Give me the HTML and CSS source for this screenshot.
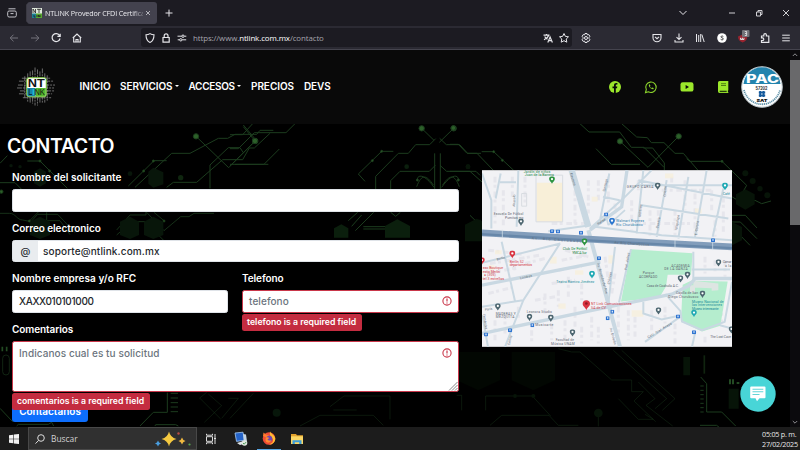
FILE: index.html
```html
<!DOCTYPE html>
<html lang="es">
<head>
<meta charset="utf-8">
<title>NTLINK Provedor CFDI Certificado</title>
<link rel="stylesheet" href="styles.css">
</head>
<body>
<svg width="0" height="0" class="defs">
  <symbol id="pin" viewBox="-10 -12 20 26"><path d="M0 12C-2 6-9 3-9-3A9 9 0 0 1 9-3C9 3 2 6 0 12Z"/><circle cy="-3" r="3.6" fill="#fff"/></symbol>
  <symbol id="stop" viewBox="0 0 12 12"><rect width="12" height="12" rx="2" fill="#2f74d0"/><path d="M4 3h4v5H4z" fill="#d8e8fb"/></symbol>
  <symbol id="warn" viewBox="0 0 12 12"><circle cx="6" cy="6" r="4.1" fill="none" stroke="#c9374a" stroke-width="1.1"/><path d="M6 3.5v3M6 7.6v1" stroke="#c9374a" stroke-width="1.2"/></symbol>
</svg>

<div class="tabbar">
  <svg class="ic recent" viewBox="0 0 16 16"><rect x="3.7" y="6" width="8.6" height="6" rx="1.4"/><path d="M4.5 3.8h7M6.500 8.600h3"/></svg>
  <div class="tab">
    <svg class="favicon" viewBox="0 0 10 10"><rect width="10" height="10" fill="#dfe8dd"/><rect y="5.5" width="4" height="4.5" fill="#1b7f94"/><rect x="4" y="5.5" width="6" height="4.5" fill="#55a52f"/><path d="M1 5V1l2.500 4V1M5 1.300h4M7 1v4M2 7v2h1.500M5 7v2M6.500 9V7l1.500 2V7" stroke="#222" stroke-width=".8" fill="none"/></svg>
    <span class="tab-title">NTLINK Provedor CFDI Certifica</span>
    <svg class="close" viewBox="0 0 8 8"><path d="M2 2l4 4M6 2l-4 4"/></svg>
  </div>
  <svg class="ic plus" viewBox="0 0 16 16"><path d="M8 4.600v7M4.500 8h7"/></svg>
  <svg class="ic chev" viewBox="0 0 16 16"><path d="M4.500 6l3.500 3.500L11.500 6"/></svg>
  <svg class="ic win" viewBox="0 0 16 16"><path d="M5 8h6"/></svg>
  <svg class="ic win" viewBox="0 0 16 16"><path d="M5.500 7h4v4h-4zM7 7V5.500h4v4H9.500"/></svg>
  <svg class="ic win" viewBox="0 0 16 16"><path d="M5 5l6 6M11 5l-6 6"/></svg>
</div>

<div class="toolbar">
  <div class="navs">
    <svg class="ic dim" viewBox="0 0 16 16"><path d="M12 8H4.200M7.500 4.700L4.200 8l3.300 3.300"/></svg>
    <svg class="ic dim" viewBox="0 0 16 16"><path d="M4 8h7.800M8.500 4.700L11.800 8l-3.300 3.300"/></svg>
    <svg class="ic" viewBox="0 0 16 16"><path d="M11.600 5.600A4 4 0 1 0 12 8.500M12.200 3.700v2.700H9.400" stroke-width="1.200"/></svg>
    <svg class="ic" viewBox="0 0 16 16"><path d="M3.800 8L8 4l4.200 4M4.700 7.500V12h6.600V7.500M7 12V9.500h2V12" stroke-width="1.100"/></svg>
  </div>
  <div class="urlbar">
    <svg class="ic" viewBox="0 0 16 16"><path d="M8 3.600c1.300.8 2.600 1.100 4 1.100 0 3.500-.8 6.300-4 7.700-3.200-1.400-4-4.200-4-7.700 1.400 0 2.700-.3 4-1.100z" stroke-width="1.100"/></svg>
    <svg class="ic" viewBox="0 0 16 16"><path d="M5 7.500h6.200v4.700H5zM6.200 7.500V5.700a1.900 1.900 0 0 1 3.800 0v1.800" stroke-width="1.200"/></svg>
    <svg class="ic" viewBox="0 0 16 16"><path d="M3.500 6.200h4.200M10.500 6.200h1.800M3.700 9.800h1.600M8.200 9.800h4"/><circle cx="9" cy="6.200" r="1.200"/><circle cx="6.800" cy="9.800" r="1.200"/></svg>
    <span class="url">https://www.<b>ntlink.com.mx</b>/contacto</span>
    <svg class="ic" viewBox="0 0 16 16"><path d="M3.500 5.200h6M6.500 4v1.200M8.800 5.200C8 7.500 6 9 4 9.800M4.700 6.500c.8 1.500 1.800 2.200 2.800 2.700M7.800 12.500l2.300-5.500 2.300 5.500M8.600 10.700h3" stroke-width="1.200"/></svg>
    <svg class="ic" viewBox="0 0 16 16"><path d="M8 3.500l1.400 2.900 3.100.4-2.300 2.200.6 3.200L8 10.700l-2.800 1.500.6-3.200-2.300-2.200 3.100-.4z"/></svg>
  </div>
  <svg class="ic gear" viewBox="0 0 16 16"><path d="M7 3.500h2l.4 1.400 1.400-.3 1.100 1.700-.9 1.200v1l.9 1.200-1.100 1.700-1.400-.3L9 12.500H7l-.4-1.400-1.400.3-1.100-1.700.9-1.200v-1l-.9-1.200 1.100-1.700 1.400.3z"/><circle cx="8" cy="8" r="1.500"/></svg>
  <div class="tools">
    <svg class="ic" viewBox="0 0 16 16"><path d="M4 4.500h8v3.200a4 4 0 0 1-8 0zM6 6.800l2 1.900 2-1.900" stroke-width="1.100"/></svg>
    <svg class="ic" viewBox="0 0 16 16"><path d="M8 3.500v6M5.500 7.200L8 9.600l2.500-2.400M4 10v2h8v-2" stroke-width="1.100"/></svg>
    <svg class="ic" viewBox="0 0 16 16"><path d="M4.500 4v8M6.700 5v7M8.700 4v8M9.800 4.500l2.400 7.500"/></svg>
    <svg class="ic" viewBox="0 0 16 16"><circle cx="8" cy="8" r="4.800" fill="#fff" stroke="none"/><path d="M9.300 6.500c-1-.9-2.500-.4-2.300.5.200 1 2.300.7 2.300 1.900 0 1-1.600 1.300-2.600.4" stroke="#333"/></svg>
    <svg class="ic" viewBox="0 0 16 16"><path d="M3 6.500l4.500-2 4.800 2c0 3-1.800 5-4.600 6C4.500 11.500 3 9.500 3 6.500z" fill="#98242f" stroke="none"/><path d="M5.500 7.800v1.700h1.800V7.800v1.700H9V7.800" stroke="#ddd"/><rect x="7" y="0" width="7.500" height="7" rx="1" fill="#737378" stroke="none"/><path d="M9.800 1.500h1.800v4M10 3.500h1.500M9.800 5.500h1.800" stroke="#eee" stroke-width=".8"/></svg>
    <svg class="ic" viewBox="0 0 16 16"><path d="M4.500 6h2.300V5a1.300 1.300 0 0 1 2.600 0v1h2.400v6.300H4.500v-1.800h1a1.300 1.300 0 0 0 0-2.600h-1z" stroke-width="1.200"/></svg>
    <svg class="ic" viewBox="0 0 16 16"><path d="M4.200 5.200h7.600M4.200 8h7.600M4.200 10.800h7.600"/></svg>
  </div>
</div>

<div class="viewport">
<div class="page">
  <header class="header">
    <svg class="logo" viewBox="0 0 40 40">
      <path d="M8 9v22M11 6v29M13.500 4v32M16 3v34M18.500 0v39M21 2v37M23.500 4v33M26 1v36M28.500 6v30M31 8v26M2 14h36M1 18h38M0 21h38M3 24h35M2 27h34M5 11h29M6 31h29" stroke="#8a8a8a" stroke-width=".8" stroke-dasharray="5 1 2 1"/>
      <rect x="10" y="10.500" width="20" height="19.500" rx="2" fill="#fff" stroke="#78c838"/>
      <path d="M10.500 21H19v8.500h-7q-1.500 0-1.500-1.500z" fill="#1787a8"/><path d="M19 21h10.500v7q0 1.500-1.500 1.500h-9z" fill="#55b82f"/>
      <text x="11" y="20.300" font-size="10.500" font-weight="600" textLength="17.500" lengthAdjust="spacingAndGlyphs" fill="#111">NT</text>
      <text x="11.500" y="28.600" font-size="8.500" textLength="17" lengthAdjust="spacingAndGlyphs"><tspan fill="#111">L</tspan><tspan fill="#2ce0ff">I</tspan><tspan fill="#111">NK</tspan></text>
    </svg>
    <nav class="menu">
      <span class="m1">INICIO</span><span class="m2 drop">SERVICIOS</span><span class="m3 drop">ACCESOS</span><span class="m4">PRECIOS</span><span class="m5">DEVS</span>
    </nav>
    <div class="social">
      <svg viewBox="0 0 14 14"><circle cx="7" cy="7" r="6" fill="#9be72b"/><path d="M6 13V8.300H4.500V6.600H6V5.300C6 3.800 6.900 3 8.200 3h1.200v1.500h-.8c-.6 0-.8.400-.8.900v1.200h1.500l-.3 1.700H7.800V13z" fill="#0a0a0a"/></svg>
      <svg viewBox="0 0 14 14"><path d="M1.500 12.600l.8-3A5.200 5.200 0 1 1 4.400 11.800z" fill="none" stroke="#8bd32c" stroke-width="1.100"/><path d="M5.200 4.300c-1 1 .1 2.800 1.200 3.800 1.100 1.100 2.700 1.700 3.300.7l-.2-.7-1.200-.6-.7.600c-.8-.3-1.400-.9-1.700-1.700l.5-.6-.5-1.300z" fill="#8bd32c"/></svg>
      <svg viewBox="0 0 14 14"><rect x=".5" y="2.300" width="13" height="9.300" rx="2.200" fill="#9be72b"/><path d="M5.600 5v4l3.400-2z" fill="#0a0a0a"/></svg>
      <svg viewBox="0 0 14 14"><path d="M3.500 1H12.300v9.200l-.4.500v1.500h.5V13H3.500A1.700 1.700 0 0 1 2 11.300V2.500A1.500 1.500 0 0 1 3.500 1z" fill="#9be72b"/><path d="M5 3.700h5M5 5.500h5" stroke="#3b650b" stroke-width=".8"/><path d="M3.700 10.700h7v1.400h-7z" fill="#253c0b"/></svg>
    </div>
    <svg class="pac" viewBox="0 0 42 42">
      <circle cx="21" cy="21" r="20.300" fill="#fff" stroke="#b8c4ca"/>
      <path d="M2.500 18a18.600 18.600 0 0 1 37 0z" fill="#2384ae"/>
      <path d="M3 24a18.500 18.500 0 0 0 36 0" fill="none" stroke="#5f91a8" stroke-width="1.800" stroke-dasharray="1.200 .7"/>
      <text x="5" y="17" font-size="11.500" font-weight="800" textLength="33" lengthAdjust="spacingAndGlyphs" fill="#fff">PAC</text>
      <text x="14.500" y="24" font-size="4.800" font-weight="700" textLength="12" lengthAdjust="spacingAndGlyphs" fill="#222">57202</text>
      <path d="M19.200 25v6M22.500 25v6M17.800 26.500h6.400M17.800 29.500h6.400" stroke="#155a9c" stroke-width="1.800"/>
      <text x="15.500" y="35.500" font-size="4" font-weight="900" textLength="11" lengthAdjust="spacingAndGlyphs" fill="#111">SAT</text>
    </svg>
  </header>

  <main class="main">
    <svg class="circuit" viewBox="0 124 790 303" fill="none" stroke="#1c3c1e" stroke-width="3">
      <g transform="translate(0 125) scale(.33333)">
        <path d="M0 115L22 92M82 108h38l30 30 52 52M0 173h45l20 20M500 107h-38L385 183M405 187L515 85h55l85-45h28l22-12h65l10-12h40M500 187l20-15h70l78-68h60l20-35h15l47-44M588 34l98 94 80-80M630 190v-70l55-52h35l10 15M690 118h115M730 0l38 45"/>
        <path d="M0 265h28c20 0 22 20 40 20l25 5 20-22h60l52 55M140 262v25h40l30 42M350 315l40-45h48v-10M350 330l45-40h40l65 65M440 262l52 55 50-42h25l15-10h60M88 288l40-40M492 287l-30-25" opacity=".8"/>
        <g fill="#2c6029" stroke="#1b3d1b"><circle cx="588" cy="34" r="8"/><circle cx="766" cy="48" r="8"/><circle cx="120" cy="108" r="3"/><circle cx="149" cy="138" r="3"/><circle cx="460" cy="108" r="3"/><circle cx="431" cy="138" r="3"/><circle cx="4" cy="200" r="5"/><circle cx="88" cy="288" r="3"/><circle cx="492" cy="288" r="3"/></g>
        <g fill="#08160a" stroke="none"><path d="M120 130l18 10v35l-18 10-18-10v-35zM460 128l30 14v36l-30 10-15-12v-36zM120 275l30 15v40l-30 12-30-12v-40zM390 275l27 15v40l-27 12-30-12v-40zM460 275l30 15v40l-30 12-28-12v-40z"/><circle cx="33" cy="122" r="5"/><circle cx="60" cy="125" r="5"/><circle cx="542" cy="158" r="8" fill="#0f260f"/><circle cx="390" cy="146" r="7"/></g>
      </g>
      <g transform="translate(230 110) scale(.33333)">
        <path d="M0 74h38l30-33M0 116h25l48-48h95l28-28M0 168l75-75M15 163h87l46-46M40 50l35 43M490 124h-35l-70 68 20 22M437 237v-38l68-69h30l22-26h42l18-18M482 237v-25l28-28h88l18-18M575 55l37 36M671 55l-43 42M629 85l20 19h40l24 26h40M630 166l20 18h88l12 12M614 237V130M631 237V130M562 210c0-20 25-15 50 22M685 210c0-20-25-15-50 22M560 230c15-40 30-35 50-5M688 230c-15-40-30-35-50-5M355 332l28-25M376 362l55-55M395 315l-30 34M482 307l15 12 14-12M400 350h135M400 357h135M710 350h40M710 357h40"/>
        <g fill="#2c6029"><circle cx="75" cy="93" r="8"/><circle cx="575" cy="55" r="8"/><circle cx="671" cy="55" r="8"/><circle cx="455" cy="124" r="3"/><circle cx="427" cy="152" r="3"/><circle cx="562" cy="210" r="3"/><circle cx="685" cy="210" r="3"/></g>
        <g fill="#0b1f0d" stroke="none"><path d="M312 383v-28l22-12 21 12v28zM465 383v-35l37-20 38 20v35zM707 392v-48l30-15h15v63z"/><circle cx="530" cy="170" r="7"/><circle cx="714" cy="170" r="7"/></g>
      </g>
      <g transform="translate(450 112) scale(.33333)">
        <path d="M0 97h25l26 27h30l50 52M95 119h36l60 56M0 178h60l36 32M390 35l27 25h92l35 46h38l60 60M515 35l45 40 32 2 12 15h38l33 32h25l45 52M438 110l46 47h86M510 88l84 78 92-93M710 140l10 8h96l74 72-20 35M580 108h28l35 45v22M847 255l30 18 38-8 20 10 28-8M846 310h40l35 38M846 330h25l50 50M846 345l54 55M45 342h50M45 352h50M60 310l36 35"/>
        <path d="M325 710l40 10h25l95 84h60v35h35l-28 28 65 62M515 715l160 145-38 35M490 715l160 145-35 30M565 810l50 50-27 20 80 62M505 860l60 62h45l-25-15M120 940l35-30h142l28 30h60M20 850h15v45M107 895v-43h140l55 60M445 903v40" opacity=".4"/>
        <path d="M752 795l18 20v85h45l42 42M750 940h50l10 8M751 822h10M751 835h10M751 848h10M751 861h10M751 874h10M751 887h10M751 900h10"/>
        <path d="M840 802v15M849 802v15M860 813h8" stroke="#234b23" stroke-width="6"/><path d="M763 730v55" stroke="#10240f" stroke-width="5"/>
        <g fill="#2c6029"><circle cx="10" cy="48" r="7"/><circle cx="510" cy="88" r="8"/><circle cx="686" cy="73" r="8"/><circle cx="131" cy="119" r="3"/><circle cx="157" cy="145" r="3"/><circle cx="816" cy="148" r="3"/></g>
        <g fill="#071408" stroke="none"><path d="M886 232l28 15v30l-28 16-28-16v-30zM45 388v-50l35-18 16 8v60zM846 330l30 15v40l-30 15zM700 735h20v55h-20zM836 830h30v60h-30z"/><circle cx="886" cy="184" r="9"/><circle cx="908" cy="207" r="9"/><circle cx="930" cy="230" r="8"/><circle cx="952" cy="250" r="9"/><circle cx="54" cy="165" r="7"/><circle cx="445" cy="903" r="13"/><circle cx="195" cy="852" r="6"/><circle cx="250" cy="852" r="6"/></g>
        <path d="M20 720h130v85l-65 30-65-30zM185 720h130v85l-65 30-65-30z" fill="#020702" stroke="none"/>
      </g>
      <g transform="translate(0 270) scale(.33333)">
        <path d="M420 468l40-41h42V368M0 415l38 40M50 468l5-5h90l10-6 6 11M465 468l2-4h60l8 4M512 370h22M512 384h22M512 398h22M512 411h22M512 425h22"/>
        <path d="M7 230v14M20 230v14" stroke="#234b23" stroke-width="5"/><rect x="8" y="255" width="20" height="60" rx="10" opacity=".6"/>
        <path d="M598 385l22-18M600 385l62 62M625 372l40 35-52 50M690 445l70-75M665 445l50-60h-30M990 410l42-32h138v70M900 468l60-32h160l30 30M1000 420h70" opacity=".4"/>
        <circle cx="830" cy="428" r="12" fill="#07160a" stroke="none"/>
      </g>
    </svg>

    <section class="form">
      <h1>CONTACTO</h1>
      <div class="fields">
        <label><span class="l1">Nombre del solicitante</span></label>
        <div class="input"></div>
        <label><span class="l2">Correo electronico</span></label>
        <div class="input group"><span class="at">@</span><span class="mail">soporte@ntlink.com.mx</span></div>
        <div class="row">
          <div class="col">
            <label><span class="l1">Nombre empresa y/o RFC</span></label>
            <div class="input pad"><span class="rfc">XAXX010101000</span></div>
          </div>
          <div class="col">
            <label><span class="l2">Telefono</span></label>
            <div class="input pad bad"><span class="ph">telefono</span><svg class="warn"><use href="#warn"/></svg></div>
            <div class="error e1"><span>telefono is a required field</span></div>
          </div>
        </div>
        <label><span class="l2">Comentarios</span></label>
        <div class="input pad bad area"><span class="ph">Indicanos cual es tu solicitud</span><svg class="warn"><use href="#warn"/></svg>
          <svg class="grip" viewBox="0 0 10 10"><path d="M1 9.500L9.500 1M4 9.500L9.500 4M7 9.500L9.500 7" stroke="#777" stroke-width=".9"/></svg>
          <div class="error e2"><span>comentarios is a required field</span></div>
        </div>
        <div class="button"><span>Contactanos</span></div>
      </div>
    </section>

    <svg class="map" viewBox="21 30 750 530">
      <rect x="21" y="30" width="750" height="530" fill="#f2f2f5"/>
      <g stroke="#e6e6ec" stroke-width="9" fill="none" stroke-dasharray="17 7 9 11">
        <path d="M60 50v140M85 90v110M150 50v80M112 50v60M230 190h100M300 90v100M340 60v100M370 60v60M400 50v80M420 130v30M470 120v90M490 60v30M525 150v80M550 150v70M590 50v30M600 150v80M630 60v90M660 100v130M710 90v60M745 110v110M720 180v50M480 190h180M560 90h150"/>
        <path d="M40 270l100 12M45 310l150-25M45 340l80-18M40 400l70-18M110 270l10 60M150 310l60-15M270 270l70 20M260 300l80-15M250 330l70-12M280 350v60M230 370l70-10M210 400v60M250 390v50M180 420l60-10M320 370v50M300 440v60M350 470v70M270 480v60M230 490v50M170 510v40M130 440v40M90 460v60M60 480v60M320 500v50M370 500v50M390 290l10 70M420 340l-10 60M430 440v80M460 450v90M480 470v60M530 450v60M570 440v50M690 290v50M720 300v40M750 300v50M740 390v100M600 490v60M690 530v20"/>
      </g>
      <g fill="#f8efd8"><path d="M185 68h78v117h-78z"/><g opacity=".7"><path d="M60 270h20v12H60zM225 290h20v20h-20zM350 110h18v14h-18zM400 285h14v25h-14zM470 450h35v20h-35zM660 145h20v14h-20zM570 40h25v14h-25zM300 330h25v14h-25zM40 315h18v15H40zM250 430h22v16h-22z"/></g></g>
      <path d="M183 45h80v140h-80zM140 100h15v38h-15z" fill="none" stroke="#d8dce1" stroke-width="3"/>
      <path d="M468 267l185 12-5 65h-70l-5 35-20 33-115 12zM648 362l110 2-22 133-55 17-63-30 5-110z" fill="#b5edce"/>
      <path d="M655 362l75 8v20l-20 2v-8l-55-2zM645 375h15v22h-15z" fill="#dde5e2"/>
      <g fill="none" stroke="#c9d8e2">
        <path stroke-width="19" d="M290 30l50 170"/>
        <path stroke-width="12" d="M340 210l95 350"/>
        <path stroke-width="10" d="M345 210l95-70 16-110M21 375l355-70M21 520l380-80 190-38 50-25 20-22h110"/>
        <path stroke-width="6" d="M345 205l105-95 80-80M21 40l28 80v85M130 30l-5 170M77 40l-15 75M75 66h48M80 245l40 178M21 308l235-58M255 250l-110 170-55 140M21 440l123-20M22 465l17 95M403 40l-28 140M384 110l50 10M505 30l-20 190M490 60l280 55M500 135l260 40M575 60l-30 170M640 50l-30 185M695 30l-35 200M745 85l-32 145M490 75l281 0M345 195l-125 18M420 260l-20 170M468 267l-36 160M655 275v85M650 328h115M571 402l45 50 5 32 60 26 68-25 22-120M505 425v35l55 18 55-12M615 470l-105 75M661 515l-10 45M360 200l200 25 211 15M735 495l36 10"/>
      </g>
      <path d="M21 218l250 15 330 18 170 9" stroke="#829dbb" stroke-width="20" fill="none"/>
      <path d="M21 222l250 15 330 18 170 9" stroke="#6787a9" stroke-width="7" fill="none"/>
      <path d="M82 208v25M600 240v24M713 245v25" stroke="#dce8f0" stroke-width="2"/>
      <path d="M360 195l35-20 5 20M450 150l-50 45" stroke="#c9d8e2" stroke-width="5" fill="none"/>
      <path d="M300 262h40l-30 5z" fill="#b5edce"/>
      <g font-size="10" fill="#5e6670">
        <text x="56" y="164" textLength="89">Escuela De Fútbol</text><text x="90" y="176" textLength="55">Pumitas mx</text>
        <text x="455" y="84" textLength="80">GRUPO CARSA</text>
        <text x="589" y="320" textLength="55">ACADEMIA</text><text x="568" y="331" textLength="70">DE LA DANZA</text>
        <text x="503" y="343" textLength="35">Parque</text><text x="492" y="355" textLength="55">ACORPADO</text>
        <text x="515" y="381" textLength="96">Casa de Coahuila A.C.</text>
        <text x="603" y="403" textLength="66">Capilla de San</text><text x="580" y="414" textLength="90">Diego Churubusco</text>
        <text x="62" y="464" textLength="60">MADERAS Y</text><text x="62" y="475" textLength="56">MEZQUITA</text>
        <text x="155" y="460" textLength="76">Leonora Studio</text><text x="181" y="498" textLength="54">Musicarte</text>
        <text x="242" y="543" textLength="55">Facultad de</text><text x="228" y="555" textLength="71">Música UNAM</text>
        <text x="706" y="534" textLength="62">The Lost Cave</text><text x="743" y="310" textLength="26">Camar</text><text x="750" y="322" textLength="19">a la</text>
      </g>
      <g font-size="10" fill="#626d78">
        <text transform="translate(170 237) rotate(4)" textLength="160">Av. Río Churubusco</text><text transform="translate(418 250) rotate(4)" textLength="105">Av Río Churubusco</text>
        <text transform="translate(285 40) rotate(73)">Eleuterio</text><text transform="translate(366 310) rotate(74)" textLength="95">Av. División del Nte</text><text transform="translate(404 505) rotate(74)">Av. División</text>
        <text transform="translate(66 301) rotate(-14)">Berlín</text><text transform="translate(136 357) rotate(-12)">Londres</text>
        <text transform="translate(30 452) rotate(-9)">París</text><text transform="translate(24 462) rotate(82)">Fernández</text><text transform="translate(104 555) rotate(-75)">Corina</text>
        <text transform="translate(390 95) rotate(-78)">Santiago</text><text transform="translate(370 195) rotate(-35)">Rafael</text><text transform="translate(497 170) rotate(-83)">Mártires</text><text transform="translate(550 205) rotate(-80)">Oaxaca</text><text transform="translate(606 210) rotate(-80)">Iztapalapa</text><text transform="translate(666 225) rotate(-82)">E. Corona</text><text transform="translate(572 110) rotate(-84)">Oriente</text>
        <text transform="translate(404 373) rotate(-80)">Chiclayo</text><text transform="translate(455 330) rotate(-80)">Prol. Juárez</text><text transform="translate(520 535) rotate(-31)" textLength="83">Calz. Gral. Anaya</text>
        <text transform="translate(120 140) rotate(-88)">Abasolo</text>
      </g>
      <g font-size="10.500">
        <g fill="#238845"><text x="146" y="38" textLength="80">Jardín de niños</text><text x="149" y="48" textLength="88">Juan de la Barrera</text><text x="263" y="270" textLength="73">Club De Futbol</text><text x="292" y="282" textLength="43">YMCA Sur</text></g>
        <g fill="#2b7cab"><text x="423" y="186" textLength="84">Walmart Express</text><text x="423" y="197" textLength="80">Río Churubusco</text></g>
        <g fill="#188b99"><text x="244" y="370" textLength="114">Teatro Ramiro Jiménez</text><text x="651" y="428" textLength="95">Museo Nacional de</text><text x="651" y="439" textLength="90">las Intervenciones</text><text x="651" y="450" textLength="80">Museo interesante</text><text x="743" y="105">Café</text></g>
        <g fill="#d43a49"><text x="104" y="308" textLength="42">Berlín 52</text><text x="104" y="318" textLength="67">departamentos</text><text x="23" y="327" textLength="61">sso Boutique</text><text x="23" y="338" textLength="52">estia Merlin</text><text x="27" y="349" textLength="35">● (305)</text><text x="23" y="360" textLength="64">tel 3 estrellas</text><text x="348" y="436" textLength="122">NT Link Comunicaciones</text><text x="348" y="447" textLength="45">SA de CV</text></g>
      </g>
      <g fill="#4d6670">
        <use href="#pin" x="128" y="175" width="20" height="24"/><use href="#pin" x="538" y="67" width="20" height="24"/><use href="#pin" x="607" y="345" width="19" height="24"/><use href="#pin" x="628" y="334" width="19" height="24"/><use href="#pin" x="673" y="391" width="19" height="24"/><use href="#pin" x="541" y="441" width="19" height="24"/><use href="#pin" x="59" y="429" width="19" height="24"/><use href="#pin" x="154" y="461" width="19" height="24"/><use href="#pin" x="218" y="463" width="19" height="24"/><use href="#pin" x="283" y="507" width="19" height="24"/><use href="#pin" x="721" y="297" width="19" height="24"/><use href="#pin" x="760" y="498" width="19" height="24"/>
      </g>
      <g fill="#2c9440"><use href="#pin" x="221" y="48" width="20" height="25"/><use href="#pin" x="319" y="234" width="19" height="25"/></g>
      <g fill="#20a9b4"><use href="#pin" x="341" y="332" width="20" height="25"/><use href="#pin" x="740" y="67" width="20" height="25"/><use href="#pin" x="647" y="449" width="20" height="24"/></g>
      <use href="#pin" x="401" y="173" width="20" height="25" fill="#2e78cf"/>
      <g fill="#d93340"><use href="#pin" x="102" y="271" width="20" height="25"/><use href="#pin" x="12" y="291" width="18" height="24"/><path d="M334 450c-3-9-11-11-11-19a11 11 0 0 1 22 0c0 8-8 10-11 19z"/><circle cx="334" cy="430" r="4" fill="#8e1822"/></g>
      <use href="#stop" x="225" y="207" width="12" height="12"/><use href="#stop" x="243" y="208" width="12" height="12"/><use href="#stop" x="312" y="212" width="12" height="12"/><use href="#stop" x="387" y="157" width="13" height="12"/><use href="#stop" x="366" y="288" width="12" height="12"/><use href="#stop" x="708" y="234" width="12" height="12"/><use href="#stop" x="406" y="449" width="12" height="12"/><use href="#stop" x="392" y="468" width="12" height="12"/><use href="#stop" x="166" y="489" width="12" height="12"/><use href="#stop" x="99" y="504" width="12" height="12"/><use href="#stop" x="27" y="517" width="12" height="12"/><use href="#stop" x="603" y="463" width="12" height="12"/><use href="#stop" x="651" y="510" width="12" height="12"/>
    </svg>
    <svg class="chat" viewBox="0 0 36 36"><circle cx="18" cy="18" r="17.700" fill="#48d5d7"/><path d="M11.200 10.500h13.300q1 0 1 1v9.700q0 1-1 1h-5l-2.500 3-1.500-3h-4.300q-1 0-1-1v-9.700q0-1 1-1z" fill="#fff"/><path d="M12.500 13.200h10.800M12.500 15.800h10.800M12.500 18.500h7" stroke="#62d5d7" stroke-width="1.100"/></svg>
  </main>
</div>
<div class="scroll">
  <svg viewBox="0 0 10 10"><path d="M2.800 6L5 3.800 7.200 6" /></svg>
  <div class="thumb"></div>
  <svg viewBox="0 0 10 10" class="down"><path d="M2.800 4L5 6.200 7.200 4"/></svg>
</div>
</div>

<div class="taskbar">
  <svg class="start" viewBox="0 0 12 12"><path d="M1 2.300l4.300-.6v4H1zM5.900 1.600L11 1v4.700H5.900zM1 6.300h4.300v4L1 9.800zM5.900 6.300H11V11l-5.100-.6z" fill="#f2f2f2"/></svg>
  <div class="search">
    <svg class="lens" viewBox="0 0 12 12"><circle cx="7" cy="5" r="3.300"/><path d="M4.600 7.400L1.500 10.600"/></svg>
    <span>Buscar</span>
    <svg class="spark" viewBox="0 0 38 18"><path d="M15 1.500q1.300 6 7.500 7.500-6.200 1.500-7.500 7.500Q13.700 10.500 7.500 9 13.700 7.500 15 1.500z" fill="#f5c940"/><path d="M28 7.500q.8 2.800 3.500 3.500-2.700.8-3.500 3.500-.8-2.700-3.500-3.500 2.700-.7 3.500-3.500z" fill="#f0b840"/><path d="M4 10.500q.6 2.400 3 3-2.400.6-3 3-.6-2.400-3-3 2.400-.6 3-3z" fill="#4a9ee0"/><circle cx="24.500" cy="3.500" r="1.200" fill="#b94b43"/><circle cx="35.500" cy="14.500" r="1.100" fill="#59a64e"/></svg>
  </div>
  <svg class="tview" viewBox="0 0 14 14"><path d="M2.500 4.700h6v4.600h-6zM2.500 1.800v1.400h6V1.800M2.500 12.200v-1.400h6v1.400M11 2v3M11 8v4" fill="none" stroke="#ddd"/><path d="M10 5.500h2v2h-2z" fill="#ddd"/></svg>
  <svg class="app" viewBox="0 0 16 16"><path d="M2 2l8-.8 1.500 8-8 1.200z" fill="#2463c8" stroke="#a8cdf2" stroke-width=".8"/><path d="M10 3l3 .5 1 7-3 1z" fill="#c5d5e2"/><path d="M4 12l5-1.500 3 2-5 1.600z" fill="#e1e6e9"/><circle cx="11.500" cy="12" r="2.800" fill="#dfe9df"/><path d="M10 12l1.200 1.200 2-2.200" fill="none" stroke="#519a58"/></svg>
  <div class="active">
    <svg class="app" viewBox="0 0 16 16"><circle cx="8" cy="8.500" r="6.300" fill="#ef4c35"/><path d="M9 1.200c.5 2.500 5.500 4 5.300 8-.3 3-3 5.300-6.300 5.300 3-1 4.500-3 4-5-.7-2.500-4-3-3-8.300z" fill="#ffbd32"/><path d="M2 6l.5-3.500 2 1.800L8 5.500 6 8z" fill="#ff7b2f"/><circle cx="8.300" cy="8.800" r="3" fill="#6d48b0"/><path d="M5 7.500q2.500-.5 3.300.8-1.300.3-1.800 1.500 1.500 1.500 4 .2-1 3-4 2.600-3-1-1.500-5.100z" fill="#ff8a30"/></svg>
  </div>
  <svg class="app" viewBox="0 0 16 16"><path d="M2 3h5l1 1.300h6V7H2z" fill="#e2a12c"/><path d="M2 5.300h12V13H2z" fill="#fbd765"/><path d="M3.500 13V9.200h9V13h-2.300v-1.800H5.800V13z" fill="#3d9ed9"/></svg>
  <div class="clock"><span>05:05 p. m.</span><span>27/02/2025</span></div>
</div>
</body>
</html>
```
FILE: styles.css
```css
* { box-sizing: border-box; }
body { margin: 0; width: 800px; height: 450px; overflow: hidden; display: flex; flex-direction: column; background: #000; font-family: Inter, "Liberation Sans", sans-serif; }
svg { flex: none; display: block; }
span { white-space: nowrap; }
.defs { position: absolute; }
.ic { width: 16px; height: 16px; fill: none; stroke: #e6e6ea; stroke-width: 1; }
.dim { stroke: #74737c; }

.tabbar { height: 26px; flex: none; background: #1c1b22; display: flex; align-items: center; padding-left: 4px; }
.recent { margin-right: 5px; stroke: #c4c4ca; }
.tab { width: 130px; height: 22px; margin-left: 2px; border-radius: 3px; background: #43424e; display: flex; align-items: center; padding: 0 5px; box-shadow: -3px 0 0 -2px #3a3942; }
.favicon { width: 10px; height: 10px; margin-right: 3px; }
.tab-title { width: 98px; font: 7.200px "Open Sans", sans-serif; letter-spacing: -.15px; color: #ececf0; -webkit-mask-image: linear-gradient(90deg, #000 88%, rgba(0,0,0,.3)); mask-image: linear-gradient(90deg, #000 88%, rgba(0,0,0,.3)); }
.close { width: 8px; height: 8px; margin-left: 1px; stroke: #d0d0d5; stroke-width: .8; }
.plus { margin-left: 4px; }
.chev { margin-left: auto; margin-right: 33px; }
.win { margin-right: 11px; stroke: #cfcfd3; }
.win:last-child { margin-right: 6px; }

.toolbar { height: 24px; flex: none; background: #2b2a33; display: flex; align-items: center; padding: 0 6px; border-bottom: 1px solid #45444e; }
.navs { display: flex; gap: 5px; width: 135px; }
.urlbar { width: 431px; height: 19px; border-radius: 3px; background: #1c1b22; display: flex; align-items: center; padding-left: 1px; }
.url { font: 7.900px "Open Sans", sans-serif; letter-spacing: -.1px; color: #a5a4ac; margin-left: 3px; margin-right: auto; }
.url b { color: #fff; font-weight: 500; }
.gear { margin-left: 6px; }
.tools { margin-left: auto; display: flex; gap: 5.500px; }

.viewport { flex: 1; min-height: 0; display: flex; }
.page { width: 790px; display: flex; flex-direction: column; }
.scroll { width: 10px; background: #0b0a0d; display: flex; flex-direction: column; }
.scroll svg { width: 10px; height: 10px; fill: none; stroke: #8c8c90; }
.scroll .down { margin-top: auto; }
.thumb { height: 165px; background: #69696b; }

.header { height: 74px; flex: none; background: #090909; display: flex; align-items: center; padding: 0 7px 0 17px; }
.logo { width: 39px; height: 40px; font-family: "Liberation Sans", sans-serif; margin-top: -1px; }
.menu { display: flex; margin-left: 23.500px; color: #fff; font-size: 10px; font-weight: 600; margin-top: -2px; }
.menu span { display: block; }
.m1 { width: 40.500px; letter-spacing: .05px; }
.m2 { width: 68.500px; letter-spacing: -.08px; }
.m3 { width: 62.500px; letter-spacing: -.3px; }
.m4 { width: 53px; letter-spacing: -.05px; }
.m5 { letter-spacing: -.1px; }
.drop::after { content: ""; display: inline-block; vertical-align: 3px; margin-left: 2px; border: 2.300px solid transparent; border-top-color: #fff; border-bottom: 0; }
.social { margin-left: auto; display: flex; gap: 22px; margin-right: 11px; }
.social svg { width: 14px; height: 14px; }
.pac { width: 42px; height: 42px; }

.main { flex: 1; position: relative; background: #000; display: flex; align-items: flex-start; min-height: 0; }
.circuit { position: absolute; left: 0; top: 0; width: 790px; height: 303px; }
.form { width: 482px; padding: 10px 23px 0 7px; position: relative; color: #fff; }
h1 { margin: 0 0 3px; height: 24px; line-height: 24px; font-size: 19.500px; font-weight: 600; letter-spacing: -.4px; }
.fields { padding-left: 5px; font-weight: 600; font-size: 10px; }
label { display: block; height: 28px; line-height: 15px; padding-top: 9px; }
.l1 { letter-spacing: .05px; }
.l2 { letter-spacing: -.08px; }
.input { height: 22.500px; background: #fff; border: 1px solid #dfe3e8; border-radius: 2.500px; color: #24282d; display: flex; align-items: center; font-weight: 500; position: relative; }
.group { overflow: hidden; }
.at { width: 25px; align-self: stretch; background: #e9ecef; display: flex; align-items: center; justify-content: center; margin-right: 5px; }
.mail { letter-spacing: .13px; }
.rfc { letter-spacing: -.33px; }
.pad { padding: 0 6px; }
.row { display: flex; gap: 14px; height: 50.500px; }
.col { width: 216px; }
.col + .col { width: auto; flex: 1; }
.bad { border-color: #c9374a; }
.ph { color: #6b747d; letter-spacing: .08px; }
.warn { width: 12px; height: 12px; margin-left: auto; margin-right: -1px; }
.error { background: #c42c40; color: #fff; height: 17px; border-radius: 2.500px; font-size: 8.700px; font-weight: 600; padding-left: 5px; display: flex; align-items: center; }
.e1 { width: 120px; margin-top: 1px; position: relative; }
.e2 { width: 138px; position: absolute; left: -1px; top: 51px; z-index: 1; }
.area { height: 51px; align-items: flex-start; padding-top: 5px; }
.grip { position: absolute; right: 0; bottom: 0; width: 10px; height: 10px; }
.button { width: 76px; height: 22.500px; margin-top: 8px; border-radius: 3px; background: #0d6efd; color: #fff; display: flex; align-items: center; justify-content: center; font-weight: 600; }
.map { width: 250px; height: 177px; margin-top: 46px; position: relative; font-family: Roboto, sans-serif; }
.chat { position: absolute; left: 740px; top: 252px; width: 36px; height: 36px; }

.taskbar { height: 23px; flex: none; background: #1c1c1c; display: flex; align-items: center; font-family: "Open Sans", sans-serif; color: #e8e8e8; }
.start { width: 12px; height: 12px; margin: 0 8px; }
.search { width: 169px; height: 23px; background: #303030; border: 1px solid #484848; display: flex; align-items: center; padding-left: 5px; font-size: 8.400px; color: #d2d2d2; }
.lens { width: 12px; height: 12px; fill: none; stroke: #ddd; margin-right: 5px; }
.spark { width: 38px; height: 18px; margin-left: auto; margin-right: 4px; }
.tview { width: 14px; height: 14px; margin: 0 15px 0 7px; }
.app { width: 16px; height: 16px; }
.active { width: 24px; height: 23px; display: flex; align-items: center; justify-content: center; margin: 0 8px; border-bottom: 1.500px solid #5aa9e6; }
.clock { margin-left: auto; width: 38px; font-size: 7.200px; line-height: 10px; display: flex; flex-direction: column; letter-spacing: -.23px; }
```
